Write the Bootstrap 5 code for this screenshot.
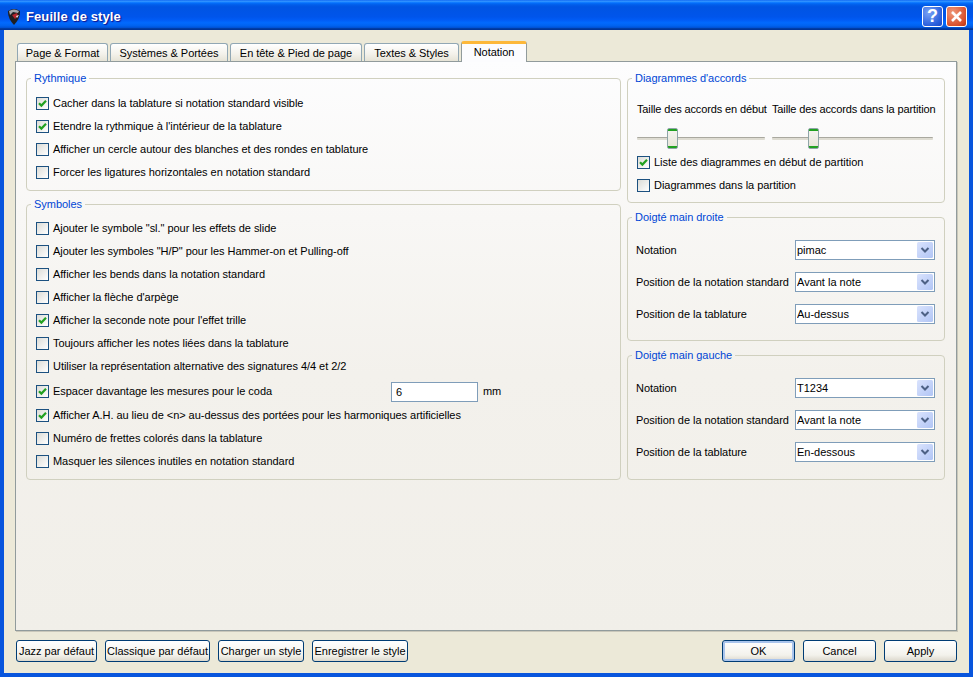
<!DOCTYPE html>
<html lang="fr"><head><meta charset="utf-8"><title>Feuille de style</title>
<link href="https://cdn.jsdelivr.net/npm/bootstrap@5.3.0/dist/css/bootstrap.min.css" rel="stylesheet">
<style>
html,body{height:100%;margin:0;overflow:hidden}
body{font-family:"Liberation Sans",Arial,sans-serif;font-size:11px;line-height:13px;letter-spacing:-.04px;color:#000;background:#ece9d8}
.xp-window{width:973px;height:677px;background:#0855dd}
.xp-title{height:30px;padding:2px 6px 0 7px;background:linear-gradient(180deg,#0058ee 0,#3593ff 3%,#288eff 6%,#127dff 8%,#036ffc 10%,#0262ee 14%,#0057e5 20%,#0054e3 24%,#0055eb 56%,#005bf5 66%,#026afe 76%,#0062ef 86%,#0052d6 92%,#0040ab 94%,#003092 100%)}
.xp-title-text{font-size:13px;font-weight:700;color:#fff;text-shadow:1px 1px 1px #0f1089;margin-left:5px;letter-spacing:.1px}
.xp-cap{width:21px;height:21px;border:1px solid #fff;border-radius:3px;color:#fff;padding:0;font-weight:700;line-height:19px;font-size:18px;text-align:center;margin-left:3px}
.xp-cap-help{background:radial-gradient(circle at 30% 30%,#7aa3f5,#2a5fdc 70%,#1c47c4)}
.xp-cap-close{background:radial-gradient(circle at 30% 30%,#ef9a7c,#d9502c 70%,#b8330f)}
.xp-cap svg{display:block;margin:3px}
.xp-body{background:#ece9d8;margin:0 4px 4px;flex:1 1 auto;min-height:0;padding:11px 12px 0 11px}
.xp-tabs{height:20px;padding-left:2px;gap:2px;align-items:flex-end}
.xp-tab{height:18px;padding:0;text-align:center;line-height:18px;border:1px solid #91a7b4;border-bottom:0;border-radius:3px 3px 0 0;background:linear-gradient(180deg,#fff,#f3f1ea 60%,#e6e3d6);white-space:nowrap;color:#000}
.xp-tab-1{width:91px}.xp-tab-2{width:118px}.xp-tab-3{width:132px}.xp-tab-4{width:95px}.xp-tab-5{width:66px}
.xp-tab-on{height:21px;line-height:17px;background:#fcfcfe;border-color:#919b9c;border-top:3px solid #fdb83a;position:relative;top:1px;z-index:2}
.xp-pane{height:570px;border:1px solid #919b9c;background:linear-gradient(180deg,#fdfdfe,#f3f1ec 55%,#f1efe9);padding:0 10px;box-shadow:1px 1px 0 #c9c7ba}
.xp-left{width:595px;gap:7px}
.xp-right{width:318px;margin-left:6px;gap:8px}
fieldset.xp-group{border:1px solid #d0d0bf;border-radius:4px;padding:0 9px;margin:0;min-width:0}
fieldset.xp-top{margin-top:10px}
fieldset.xp-group-r{padding:0 8px 0 9px}
legend.xp-legend{float:none;width:auto;font-size:11px;line-height:13px;color:#0046d5;padding:0 3px;margin:0 0 0 -5px}
.xp-rows{padding-top:7px;padding-bottom:6px}
.xp-rows-b{padding-top:6px}
.xp-row{height:23px;margin:0;padding:0;min-height:0}
.xp-row-gap2{margin-top:2px}.xp-row-gap1{margin-top:1px}
.xp-row .form-check-input{width:13px;height:13px;margin:0 4px 0 0;float:none;flex:none;border:1px solid #1c5180;border-radius:0;background-color:#fff;background-image:linear-gradient(135deg,#dcdcd7,#fff)}
.xp-row .form-check-input:checked{background-color:#fff;border-color:#1c5180;background-image:url("data:image/svg+xml,%3Csvg xmlns='http://www.w3.org/2000/svg' viewBox='0 0 11 11'%3E%3Cpath d='M2 5.2 L4.4 7.6 L9 2.8' fill='none' stroke='%2321a121' stroke-width='2.2'/%3E%3C/svg%3E"),linear-gradient(135deg,#dcdcd7,#fff);background-size:11px 11px,100% 100%;background-repeat:no-repeat}
.xp-row .form-check-label{white-space:nowrap}
.xp-row .xp-label-fixed{width:338px;flex:none}
.xp-input{width:87px;height:20px;border:1px solid #7f9db9;border-radius:0;padding:0 4px;font-size:11px;line-height:18px;color:#000;background:#fff}
.xp-unit{margin-left:5px}
.xp-select{height:20px;width:140px;border:1px solid #7f9db9;border-radius:0;padding:0 0 0 1px;font-size:11px;line-height:18px;color:#000;background-color:#fff;background-repeat:no-repeat;background-position:right 1px top 1px;background-size:16px 16px;background-image:url("data:image/svg+xml,%3Csvg xmlns='http://www.w3.org/2000/svg' viewBox='0 0 16 16'%3E%3Cdefs%3E%3ClinearGradient id='g' x1='0' y1='0' x2='1' y2='1'%3E%3Cstop offset='0' stop-color='%23dae3fd'/%3E%3Cstop offset='1' stop-color='%23b1c5f5'/%3E%3C/linearGradient%3E%3C/defs%3E%3Crect width='16' height='16' rx='1.5' fill='url(%23g)'/%3E%3Cpath d='M4.5 6 L8 9.5 L11.5 6' fill='none' stroke='%234d6185' stroke-width='2'/%3E%3C/svg%3E")}
.xp-select:focus{box-shadow:none;border-color:#7f9db9}
.xp-fields{padding:16px 0;margin-left:-1px;display:grid;row-gap:12px}
.xp-fields-end{padding-bottom:17px}
.xp-field{height:20px}
.xp-field-label{width:159px;white-space:nowrap}
.xp-sliders{padding-top:18px;white-space:nowrap;letter-spacing:-.13px}
.xp-slider-col{width:135px;flex:none}
.xp-slider-label{margin-bottom:12px}
.xp-range{-webkit-appearance:none;appearance:none;height:21px;padding:0;background:transparent;display:block;margin:0}
.xp-range::-webkit-slider-runnable-track{height:3px;background:#dedcd2;border-top:1px solid #a9a89f;border-radius:1px}
.xp-range::-webkit-slider-thumb{-webkit-appearance:none;appearance:none;width:11px;height:21px;margin-top:-10px;border:1px solid #8fa5a8;border-radius:2px;background:linear-gradient(180deg,#21a121 0,#21a121 2px,#f4f3ee 2px,#e8e6da calc(100% - 2px),#21a121 calc(100% - 2px))}
.xp-slider-a{width:128px}
.xp-slider-b{width:161px}
.xp-checks{padding-top:2px;padding-bottom:5px}
.xp-btn{height:22px;padding:0;font-size:11px;line-height:20px;color:#000;border:1px solid #003c74;border-radius:3px;background:linear-gradient(180deg,#fff,#f3f2ec 70%,#dcd8cc);white-space:nowrap}
.xp-btn-w{width:73px}.xp-btn-j{width:81px}.xp-btn-c{width:105px}.xp-btn-l{width:86px}.xp-btn-e{width:96px}
.xp-btn-def{box-shadow:inset 0 0 0 2px #a9c4ec}
.xp-foot{padding:9px 0 0 1px}
</style></head>
<body>
<div class="xp-window d-flex flex-column">
  <div class="xp-title d-flex align-items-center">
    <svg width="14" height="17" viewBox="0 0 14 17"><path d="M1 3 Q7 -1 13 3 Q13.5 10 7 17 Q.5 10 1 3Z" fill="#1f1f22"/><path d="M2 3 Q7 0 12 3 L11 5 L6 4 L3 7Z" fill="#a4a6aa"/><path d="M5 7 L10 5 L11 8 L8 11Z" fill="#b3232a"/><path d="M9 8 L12 7 L10 10Z" fill="#e8e8e8"/></svg>
    <span class="xp-title-text flex-grow-1">Feuille de style</span>
    <div class="xp-cap xp-cap-help">?</div>
    <div class="xp-cap xp-cap-close"><svg width="13" height="13" viewBox="0 0 13 13"><path d="M2 2 L11 11 M11 2 L2 11" stroke="#fff" stroke-width="2.6" fill="none"/></svg></div>
  </div>
  <div class="xp-body">
    <div class="xp-tabs d-flex">
      <div class="xp-tab xp-tab-1">Page &amp; Format</div>
      <div class="xp-tab xp-tab-2">Systèmes &amp; Portées</div>
      <div class="xp-tab xp-tab-3">En tête &amp; Pied de page</div>
      <div class="xp-tab xp-tab-4">Textes &amp; Styles</div>
      <div class="xp-tab xp-tab-5 xp-tab-on">Notation</div>
    </div>
    <div class="xp-pane d-flex">
      <div class="xp-left d-flex flex-column">
        <fieldset class="xp-group xp-top">
          <legend class="xp-legend">Rythmique</legend>
          <div class="xp-rows">
            <div class="form-check xp-row d-flex align-items-center"><input class="form-check-input" type="checkbox" checked id="a1"><label class="form-check-label" for="a1">Cacher dans la tablature si notation standard visible</label></div>
            <div class="form-check xp-row d-flex align-items-center"><input class="form-check-input" type="checkbox" checked id="a2"><label class="form-check-label" for="a2">Etendre la rythmique à l'intérieur de la tablature</label></div>
            <div class="form-check xp-row d-flex align-items-center"><input class="form-check-input" type="checkbox" id="a3"><label class="form-check-label" for="a3">Afficher un cercle autour des blanches et des rondes en tablature</label></div>
            <div class="form-check xp-row d-flex align-items-center"><input class="form-check-input" type="checkbox" id="a4"><label class="form-check-label" for="a4">Forcer les ligatures horizontales en notation standard</label></div>
          </div>
        </fieldset>
        <fieldset class="xp-group">
          <legend class="xp-legend">Symboles</legend>
          <div class="xp-rows xp-rows-b">
            <div class="form-check xp-row d-flex align-items-center"><input class="form-check-input" type="checkbox" id="b1"><label class="form-check-label" for="b1">Ajouter le symbole "sl." pour les effets de slide</label></div>
            <div class="form-check xp-row d-flex align-items-center"><input class="form-check-input" type="checkbox" id="b2"><label class="form-check-label" for="b2">Ajouter les symboles "H/P" pour les Hammer-on et Pulling-off</label></div>
            <div class="form-check xp-row d-flex align-items-center"><input class="form-check-input" type="checkbox" id="b3"><label class="form-check-label" for="b3">Afficher les bends dans la notation standard</label></div>
            <div class="form-check xp-row d-flex align-items-center"><input class="form-check-input" type="checkbox" id="b4"><label class="form-check-label" for="b4">Afficher la flèche d'arpège</label></div>
            <div class="form-check xp-row d-flex align-items-center"><input class="form-check-input" type="checkbox" checked id="b5"><label class="form-check-label" for="b5">Afficher la seconde note pour l'effet trille</label></div>
            <div class="form-check xp-row d-flex align-items-center"><input class="form-check-input" type="checkbox" id="b6"><label class="form-check-label" for="b6">Toujours afficher les notes liées dans la tablature</label></div>
            <div class="form-check xp-row d-flex align-items-center"><input class="form-check-input" type="checkbox" id="b7"><label class="form-check-label" for="b7">Utiliser la représentation alternative des signatures 4/4 et 2/2</label></div>
            <div class="form-check xp-row xp-row-gap2 d-flex align-items-center"><input class="form-check-input" type="checkbox" checked id="b8"><label class="form-check-label xp-label-fixed" for="b8">Espacer davantage les mesures pour le coda</label><input class="xp-input" value="6"><span class="xp-unit">mm</span></div>
            <div class="form-check xp-row xp-row-gap1 d-flex align-items-center"><input class="form-check-input" type="checkbox" checked id="b9"><label class="form-check-label" for="b9">Afficher A.H. au lieu de &lt;n&gt; au-dessus des portées pour les harmoniques artificielles</label></div>
            <div class="form-check xp-row d-flex align-items-center"><input class="form-check-input" type="checkbox" id="b10"><label class="form-check-label" for="b10">Numéro de frettes colorés dans la tablature</label></div>
            <div class="form-check xp-row d-flex align-items-center"><input class="form-check-input" type="checkbox" id="b11"><label class="form-check-label" for="b11">Masquer les silences inutiles en notation standard</label></div>
          </div>
        </fieldset>
      </div>
      <div class="xp-right d-flex flex-column">
        <fieldset class="xp-group xp-group-r xp-top">
          <legend class="xp-legend">Diagrammes d'accords</legend>
          <div class="xp-sliders d-flex">
            <div class="xp-slider-col"><div class="xp-slider-label">Taille des accords en début</div><input type="range" class="xp-range xp-slider-a" value="26"></div>
            <div><div class="xp-slider-label">Taille des accords dans la partition</div><input type="range" class="xp-range xp-slider-b" value="24"></div>
          </div>
          <div class="xp-checks">
            <div class="form-check xp-row d-flex align-items-center"><input class="form-check-input" type="checkbox" checked id="c1"><label class="form-check-label" for="c1">Liste des diagrammes en début de partition</label></div>
            <div class="form-check xp-row d-flex align-items-center"><input class="form-check-input" type="checkbox" id="c2"><label class="form-check-label" for="c2">Diagrammes dans la partition</label></div>
          </div>
        </fieldset>
        <fieldset class="xp-group xp-group-r">
          <legend class="xp-legend">Doigté main droite</legend>
          <div class="xp-fields">
            <div class="xp-field d-flex align-items-center"><span class="xp-field-label">Notation</span><select class="form-select xp-select"><option>pimac</option></select></div>
            <div class="xp-field d-flex align-items-center"><span class="xp-field-label">Position de la notation standard</span><select class="form-select xp-select"><option>Avant la note</option></select></div>
            <div class="xp-field d-flex align-items-center"><span class="xp-field-label">Position de la tablature</span><select class="form-select xp-select"><option>Au-dessus</option></select></div>
          </div>
        </fieldset>
        <fieldset class="xp-group xp-group-r">
          <legend class="xp-legend">Doigté main gauche</legend>
          <div class="xp-fields xp-fields-end">
            <div class="xp-field d-flex align-items-center"><span class="xp-field-label">Notation</span><select class="form-select xp-select"><option>T1234</option></select></div>
            <div class="xp-field d-flex align-items-center"><span class="xp-field-label">Position de la notation standard</span><select class="form-select xp-select"><option>Avant la note</option></select></div>
            <div class="xp-field d-flex align-items-center"><span class="xp-field-label">Position de la tablature</span><select class="form-select xp-select"><option>En-dessous</option></select></div>
          </div>
        </fieldset>
      </div>
    </div>
    <div class="xp-foot d-flex gap-2">
      <button class="btn xp-btn xp-btn-j">Jazz par défaut</button>
      <button class="btn xp-btn xp-btn-c">Classique par défaut</button>
      <button class="btn xp-btn xp-btn-l">Charger un style</button>
      <button class="btn xp-btn xp-btn-e">Enregistrer le style</button>
      <span class="flex-grow-1"></span>
      <button class="btn xp-btn xp-btn-w xp-btn-def">OK</button>
      <button class="btn xp-btn xp-btn-w">Cancel</button>
      <button class="btn xp-btn xp-btn-w">Apply</button>
    </div>
  </div>
</div>
</body></html>
